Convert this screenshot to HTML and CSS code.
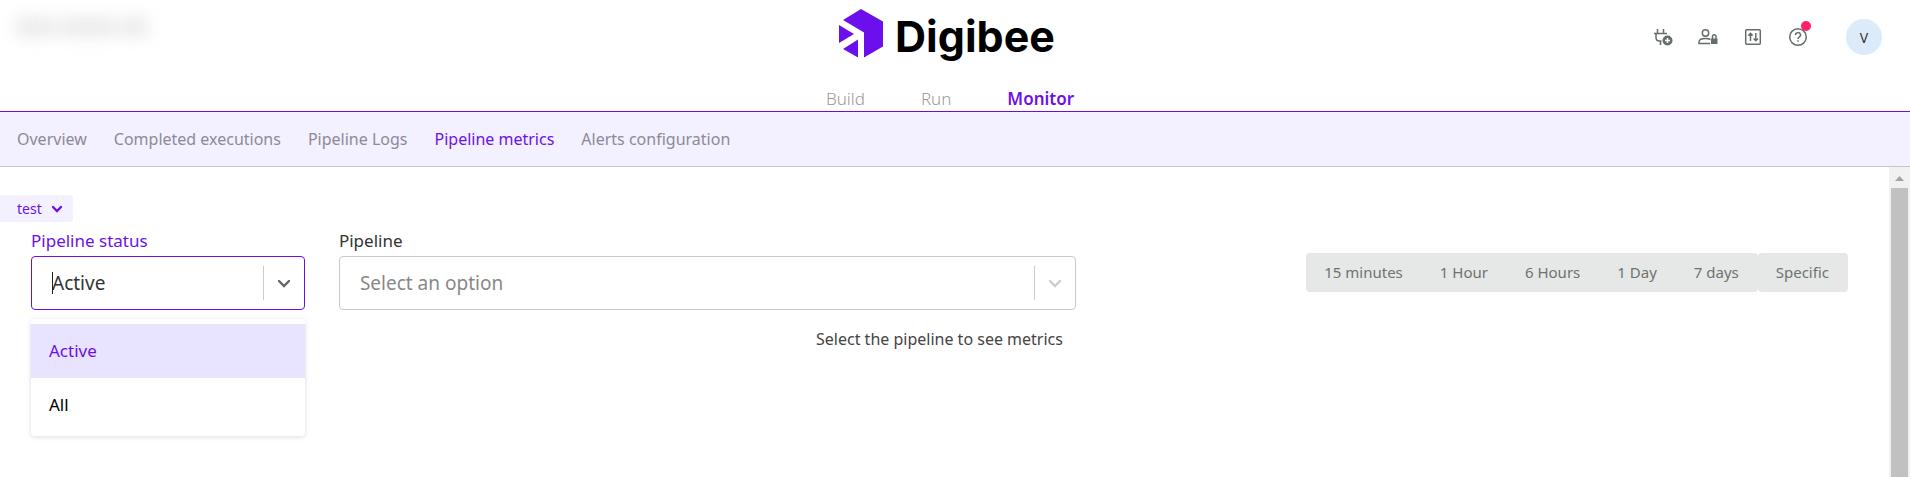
FILE: index.html
```html
<!DOCTYPE html>
<html lang="en">
<head>
<meta charset="utf-8">
<title>Digibee - Pipeline metrics</title>
<link rel="stylesheet" href="styles.css">
</head>
<body>
<header class="topbar">
  <div class="realm" aria-hidden="true"><span class="realm-word"></span><span class="realm-word realm-word-long"></span><span class="realm-word realm-word-short"></span></div>
  <div class="brand-area">
    <a class="brand" href="#">
      <svg class="brand-mark" viewBox="0 0 44 49" aria-hidden="true">
        <path fill="#6b10ec" d="M22 0 44 12.500V37.500L25 48.500V23.500L4 11Z"/>
        <path fill="#6b10ec" d="M0 16 15 25 0 34ZM19 30.500V48.500L4 40Z"/>
      </svg>
      <span class="brand-name">Digibee</span>
    </a>
    <nav class="main-nav" aria-label="Main">
      <a class="main-link" href="#">Build</a>
      <a class="main-link" href="#">Run</a>
      <a class="main-link main-link-active" href="#" aria-current="page">Monitor</a>
    </nav>
  </div>
  <div class="tools">
    <button class="tool" type="button" aria-label="Connectors">
      <svg viewBox="0 0 20 20" fill="none" stroke="#666e6c" stroke-width="1.500" aria-hidden="true">
        <path d="M4.500 2v4M10.500 2v4M1 6.500h13M3 6.500v4c0 2 1.500 3.500 3.500 3.500h2M7.500 14v4"/>
        <circle cx="14.500" cy="13.500" r="5" fill="#666e6c" stroke="none"/>
        <path stroke="#fff" d="M14.500 11v5M12 13.500h5"/>
      </svg>
    </button>
    <button class="tool" type="button" aria-label="Access control">
      <svg viewBox="0 0 20 20" fill="none" stroke="#666e6c" stroke-width="1.500" aria-hidden="true">
        <circle cx="7.500" cy="6" r="3.200"/>
        <path d="M12.500 12.500C11 11.700 9.500 11.500 7.500 11.500c-4 0-6.500 1.500-6.500 3.500v1.500h11"/>
        <path fill="#666e6c" stroke="none" d="M13 11.500h6.500V17H13z"/>
        <path d="M14.500 12V9.500a1.750 1.750 0 0 1 3.500 0V12"/>
      </svg>
    </button>
    <button class="tool" type="button" aria-label="Settings">
      <svg viewBox="0 0 20 20" fill="none" stroke="#666e6c" stroke-width="1.500" aria-hidden="true">
        <rect x="2.700" y="2.700" width="14.600" height="14.600" rx="1"/>
        <path d="M7.500 14V6.500M5.300 8.500l2.200-2.200 2.200 2.200M12.800 6v7.500M10.600 11.500l2.200 2.200 2.200-2.200"/>
      </svg>
    </button>
    <button class="tool" type="button" aria-label="Help">
      <svg viewBox="0 0 20 20" fill="none" stroke="#666e6c" stroke-width="1.500" aria-hidden="true">
        <circle cx="10" cy="10" r="8.300"/>
        <path d="M7.500 8a2.500 2.300 0 1 1 3.800 1.900c-.9.600-1.300 1-1.300 2.100M10 13.200v1.500"/>
      </svg>
      <span class="badge"></span>
    </button>
    <button class="avatar" type="button" aria-label="Account">V</button>
  </div>
</header>

<nav class="sub-nav" aria-label="Monitor">
  <a class="sub-link" href="#">Overview</a>
  <a class="sub-link" href="#">Completed executions</a>
  <a class="sub-link" href="#">Pipeline Logs</a>
  <a class="sub-link sub-link-active" href="#" aria-current="page">Pipeline metrics</a>
  <a class="sub-link" href="#">Alerts configuration</a>
</nav>

<div class="viewport">
  <main class="content">
    <button class="env" type="button">test
      <svg class="env-chevron" viewBox="0 0 12 8" aria-hidden="true"><path d="M2 2l4 4 4-4"/></svg>
    </button>
    <div class="filters">
      <div class="field field-open">
        <label class="field-label" for="status">Pipeline status</label>
        <div class="select">
          <input class="select-input" id="status" type="text" value="Active" role="combobox" aria-expanded="true" aria-controls="status-options">
          <span class="caret"></span>
          <button class="select-toggle" type="button" aria-label="Toggle status options"><svg viewBox="0 0 14 9" aria-hidden="true"><path d="M2 2l5 5 5-5"/></svg></button>
        </div>
        <ul class="options" id="status-options" role="listbox">
          <li class="option option-selected" role="option" aria-selected="true">Active</li>
          <li class="option" role="option" aria-selected="false">All</li>
        </ul>
      </div>
      <div class="field">
        <label class="field-label" for="pipeline">Pipeline</label>
        <div class="select">
          <input class="select-input" id="pipeline" type="text" placeholder="Select an option" role="combobox" aria-expanded="false">
          <button class="select-toggle" type="button" aria-label="Toggle pipeline options"><svg viewBox="0 0 14 9" aria-hidden="true"><path d="M2 2l5 5 5-5"/></svg></button>
        </div>
      </div>
      <div class="periods">
        <div class="period-group">
          <button class="period" type="button">15 minutes</button>
          <button class="period" type="button">1 Hour</button>
          <button class="period" type="button">6 Hours</button>
          <button class="period" type="button">1 Day</button>
          <button class="period" type="button">7 days</button>
        </div>
        <div class="period-group">
          <button class="period" type="button">Specific</button>
        </div>
      </div>
    </div>
    <p class="hint">Select the pipeline to see metrics</p>
  </main>
  <div class="scrollbar" aria-hidden="true">
    <svg class="scroll-arrow" viewBox="0 0 17 21"><path fill="#a3a3a3" d="M4 14h9l-4.500-5z"/></svg>
    <div class="scroll-thumb"></div>
  </div>
</div>
</body>
</html>
```
FILE: styles.css
```css
* {
  box-sizing: border-box;
}

body {
  margin: 0;
  min-height: 100vh;
  display: flex;
  flex-direction: column;
  background: #fff;
  color: #333;
  font-family: "Noto Sans", sans-serif;
  font-size: 16px;
}

a {
  text-decoration: none;
}

button,
input {
  font: inherit;
  border: 0;
  padding: 0;
  background: none;
}

button {
  cursor: pointer;
}

.topbar {
  display: grid;
  grid-template-columns: 1fr auto 1fr;
  padding: 9px 28px 0 12px;
  border-bottom: 1px solid #6b10d0;
}

.realm {
  display: flex;
  gap: 4px;
  padding: 8px 4px;
  filter: blur(8px);
}

.realm-word {
  width: 40px;
  height: 20px;
  background: #ebebeb;
}

.realm-word-long {
  width: 56px;
}

.realm-word-short {
  width: 28px;
}

.brand-area {
  display: flex;
  flex-direction: column;
  align-items: center;
  gap: 26px;
}

.brand {
  display: flex;
  gap: 12px;
  color: #000;
}

.brand-mark {
  width: 44px;
  height: 49px;
}

.brand-name {
  padding-top: 2px;
  font-family: Inter, sans-serif;
  font-size: 43px;
  font-weight: 700;
  line-height: 50px;
}

.main-nav {
  display: flex;
  gap: 56px;
  padding-left: 6px;
}

.main-link {
  color: #999;
  font-size: 17px;
  font-weight: 300;
  line-height: 24px;
}

.main-link-active {
  color: #6b10ec;
  font-weight: 600;
}

.tools {
  display: flex;
  justify-content: flex-end;
  align-items: flex-start;
  gap: 25px;
  padding-top: 10px;
}

.tool {
  position: relative;
  width: 20px;
  height: 36px;
}

.tool svg {
  display: block;
  width: 20px;
  height: 20px;
}

.badge {
  position: absolute;
  top: 2px;
  right: -3px;
  width: 10px;
  height: 10px;
  border-radius: 50%;
  background: #ff1f66;
}

.avatar {
  width: 36px;
  height: 36px;
  margin-left: 13px;
  border-radius: 50%;
  background: #dcebf9;
  color: #333;
  font-size: 14px;
}

.sub-nav {
  display: flex;
  gap: 27px;
  padding: 15px 17px;
  border-bottom: 1px solid #c4c8cc;
  background: #f3f0ff;
}

.sub-link {
  color: #8c8a96;
  font-size: 16px;
  line-height: 24px;
}

.sub-link-active {
  color: #6b10ec;
}

.viewport {
  flex: 1;
  display: flex;
}

.content {
  flex: 1;
  padding-top: 28px;
}

.env {
  display: flex;
  align-items: center;
  gap: 9px;
  padding: 0 10px 0 17px;
  border-radius: 0 4px 4px 0;
  background: #f3f0ff;
  color: #6b10ec;
  font-size: 14px;
  line-height: 27px;
}

.env-chevron {
  width: 12px;
  height: 8px;
}

.env-chevron path,
.select-toggle path {
  fill: none;
  stroke: currentColor;
  stroke-width: 2.4;
  stroke-linecap: round;
}

.filters {
  display: grid;
  grid-template-columns: minmax(0, 13fr) minmax(0, 35fr) minmax(0, 35fr);
  gap: 34px;
  padding: 7px 41px 0 31px;
}

.field {
  position: relative;
}

.field-label {
  display: block;
  padding-bottom: 3px;
  font-size: 17px;
  line-height: 24px;
}

.field-open .field-label {
  color: #6b10ec;
}

.select {
  position: relative;
  display: flex;
  align-items: center;
  height: 54px;
  border: 1px solid #c6cacb;
  border-radius: 4px;
}

.field-open .select {
  border-color: #6b10ec;
}

.select-input {
  flex: 1;
  min-width: 0;
  padding-left: 20px;
  color: #333;
  font-size: 19px;
  outline: 0;
}

.select-input::placeholder {
  color: #888;
  opacity: 1;
}

.caret {
  position: absolute;
  left: 20px;
  width: 1px;
  height: 22px;
  background: #222;
}

.select-toggle {
  width: 41px;
  height: 34px;
  border-left: 1px solid #ccc;
  color: #ccc;
}

.field-open .select-toggle {
  color: #666;
}

.select-toggle svg {
  display: block;
  width: 14px;
  height: 9px;
  margin: auto;
}

.options {
  position: absolute;
  top: 100%;
  left: 0;
  right: 0;
  margin: 9px 0 0;
  padding: 5px 0 4px;
  border-radius: 4px;
  background: #fff;
  box-shadow: 0 1px 5px rgba(0, 0, 0, 0.14);
  list-style: none;
}

.option {
  padding: 15px 18px;
  color: #000;
  font-size: 17px;
  line-height: 24px;
}

.option-selected {
  background: #e8e3ff;
  color: #6b10ec;
}

.periods {
  display: flex;
  justify-content: flex-end;
  align-items: flex-start;
  padding-top: 24px;
}

.period-group {
  display: flex;
  border-radius: 4px;
  background: #e5e8e7;
}

.period {
  padding: 0 19px 0 18px;
  color: #6d7371;
  font-size: 15px;
  line-height: 39px;
}

.hint {
  margin: 0;
  padding: 17px 41px 0 31px;
  color: #444;
  font-size: 16px;
  line-height: 24px;
  text-align: center;
}

.scrollbar {
  display: flex;
  flex-direction: column;
  width: 21px;
  padding: 0 2px;
  background: #f1f1f1;
}

.scroll-arrow {
  height: 21px;
}

.scroll-thumb {
  flex: 1;
  background: #c1c1c1;
}
```
